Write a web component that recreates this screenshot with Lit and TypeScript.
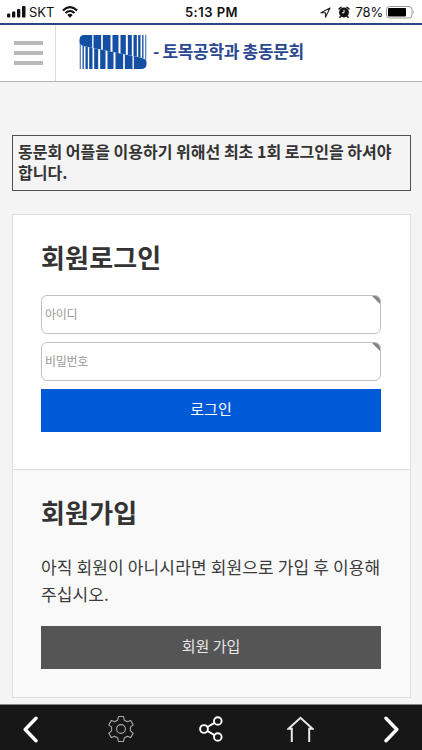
import { LitElement, html, svg, css } from "lit";
import { customElement } from "lit/decorators.js";

const LOGO_BARS = [
  [237, 39], [280, 23], [308, 23], [337, 18], [361, 16],
  [383, 12], [400, 10], [414, 7], [426, 4], [435.5, 3],
];

@customElement("app-root")
export class AppRoot extends LitElement {
  static styles = css`
    :host {
      display: flex;
      flex-direction: column;
      box-sizing: border-box;
      width: 422px;
      height: 750px;
      overflow: hidden;
      background: #f4f4f4;
      color: #333;
      font-family: "Noto Sans CJK KR", sans-serif;
    }
    * { box-sizing: border-box; }
    svg { display: block; flex: none; }
    h1, h2, p { margin: 0; }
    .status {
      display: grid;
      grid-template-columns: 1fr auto 1fr;
      align-items: center;
      height: 23px;
      flex: none;
      padding: 1px 7px 0 7px;
      background: #fff;
      color: #111;
      font: 13px/22px Inter, sans-serif;
    }
    .left, .right { display: flex; align-items: center; }
    .carrier { margin: 0 8px 0 3px; letter-spacing: -0.1px; }
    .time { font-weight: 600; letter-spacing: 0.5px; margin-left: 1px; }
    .right { justify-content: flex-end; }
    .alarm { margin: 0 6px 0 7px; }
    .percent { letter-spacing: -0.2px; margin-right: 3px; }
    .battery { margin-right: -1px; }
    .header {
      display: flex;
      height: 59px;
      flex: none;
      border-top: 2px solid #2b4686;
      border-bottom: 1px solid #b2b2b2;
      background: #fff;
    }
    .menu {
      width: 56px;
      flex: none;
      padding: 16px 0 0 14px;
      border-right: 1px solid #ddd;
    }
    .line { width: 29px; height: 4px; margin-bottom: 6px; background: #b9b9b9; }
    .brand { display: flex; align-items: flex-start; padding: 10px 0 0 23px; }
    .brand h1 {
      margin: 0 0 0 6px;
      color: #2b4791;
      font-size: 17px;
      line-height: 31px;
      font-weight: 700;
      letter-spacing: -0.33px;
      white-space: nowrap;
    }
    .content { flex: 1; min-height: 0; padding: 53px 11px 0 12px; }
    .notice {
      height: 56px;
      padding: 5px;
      border: 1px solid #505050;
      font-size: 16px;
      line-height: 21px;
      font-weight: 700;
      white-space: nowrap;
    }
    .panel {
      height: 484px;
      margin-top: 23px;
      border: 1px solid #dedede;
      background: #fff;
    }
    .login { height: 254px; padding: 22px 28px 0; }
    .join {
      height: 228px;
      padding: 22px 28px 0;
      border-top: 1px solid #dedede;
      background: #f9f9f9;
    }
    h2 { font-size: 26px; line-height: 40px; font-weight: 700; letter-spacing: 0.15px; }
    .field {
      position: relative;
      display: flex;
      align-items: center;
      width: 340px;
      height: 39px;
      margin-bottom: 8px;
      padding: 0 3px 2px;
      overflow: hidden;
      border: 1px solid #c2c2c6;
      border-radius: 6px;
      background: #fff;
      color: #999;
      font-size: 12px;
      letter-spacing: -0.3px;
    }
    .login h2 { margin-bottom: 18px; }
    .corner { position: absolute; top: 0; right: 0; }
    .button {
      display: flex;
      justify-content: center;
      width: 340px;
      height: 43px;
      font-size: 15px;
      line-height: 40px;
    }
    .primary { background: #005ad7; color: #fff; }
    .secondary { background: #555; color: #e8e8e8; }
    .join p {
      margin: 21px 0 19px;
      font-size: 17px;
      line-height: 27px;
      letter-spacing: 0.14px;
      white-space: nowrap;
      color: #3b3b3b;
    }
    .toolbar {
      display: flex;
      align-items: center;
      justify-content: space-between;
      height: 46px;
      flex: none;
      padding: 3px 22px 0;
      border-top: 1px solid #888;
      background: #171717;
    }
    .gear { margin-left: 4px; }
    .home { margin-right: 4px; }
  `;

  private bars() {
    return LOGO_BARS.map(([x, w]) => svg`<rect x=${x} y="105" width=${w} height="102" />`);
  }

  private logo() {
    return html`<svg width="68" height="34" viewBox="237 105 203 102" fill="#144fa4">
      <defs><clipPath id="half"><path d="M252 105H440V185C438 177 430 175 414 171L379 164L298 148L263 141C247 137 237 135 237 122Q238 105 252 105Z" /></clipPath></defs>
      <g clip-path="url(#half)">${this.bars()}</g>
      <g transform="rotate(180 338.5 156)"><g clip-path="url(#half)">${this.bars()}</g></g>
    </svg>`;
  }

  private field(label: string) {
    return html`<div class="field">${label}
      <svg class="corner" width="8" height="8" viewBox="0 0 8 8"><path d="M0 0H8V8Z" fill="#858580" /></svg>
    </div>`;
  }

  render() {
    return html`
      <div class="status">
        <div class="left">
          <svg width="19" height="12" viewBox="0 0 19 12" fill="#111"><rect y="7.5" width="3.3" height="4" rx="1"/><rect x="5" y="5.5" width="3.3" height="6" rx="1"/><rect x="10" y="3" width="3.3" height="8.5" rx="1"/><rect x="15" y="0" width="3.5" height="11.5" rx="1"/></svg>
          <span class="carrier">SKT</span>
          <svg width="16" height="12" viewBox="0 0 16 12" fill="none" stroke="#111" stroke-width="2.1"><path d="M.9 4.5Q8-2.3 15.1 4.5M3.5 7.1Q8 2.9 12.5 7.1"/><path d="M5.3 8.9Q8 6.5 10.7 8.9L8 11.7Z" fill="#111" stroke="none"/></svg>
        </div>
        <div class="time">5:13 PM</div>
        <div class="right">
          <svg width="11" height="11" viewBox="0 0 11 11"><path d="M.9 5.7 10 .9 5.5 10.2V5.7Z" fill="none" stroke="#222" stroke-width="1.1" stroke-linejoin="round"/></svg>
          <svg class="alarm" width="12" height="12" viewBox="0 0 12 12"><circle cx="6" cy="6.5" r="4.9" fill="#111"/><path d="M1 3 3 1.2M11 3 9 1.2M2.8 10.2 1.9 11.2M9.2 10.2l.9 1" stroke="#111" stroke-width="1.5" stroke-linecap="round"/><path d="M6 3.8V6.8H4" fill="none" stroke="#fff"/></svg>
          <span class="percent">78%</span>
          <svg class="battery" width="30" height="13" viewBox="0 0 30 13"><rect x=".5" y=".5" width="25.5" height="11.5" rx="3" fill="#fff" stroke="#999"/><rect x="2" y="2" width="18" height="8.5" rx="1" fill="#000"/><path d="M27.3 4.3q1.8 2 0 4Z" fill="#999"/></svg>
        </div>
      </div>
      <div class="header">
        <div class="menu"><div class="line"></div><div class="line"></div><div class="line"></div></div>
        <div class="brand">${this.logo()}<h1>- 토목공학과 총동문회</h1></div>
      </div>
      <div class="content">
        <div class="notice">동문회 어플을 이용하기 위해선 최초 1회 로그인을 하셔야<br />합니다.</div>
        <div class="panel">
          <div class="login">
            <h2>회원로그인</h2>
            ${this.field("아이디")}
            ${this.field("비밀번호")}
            <div class="button primary">로그인</div>
          </div>
          <div class="join">
            <h2>회원가입</h2>
            <p>아직 회원이 아니시라면 회원으로 가입 후 이용해<br />주십시오.</p>
            <div class="button secondary">회원 가입</div>
          </div>
        </div>
      </div>
      <div class="toolbar">
        <svg width="17" height="27" viewBox="0 0 17 27"><path d="M14 2.3 3.2 13.5 14 24.7" fill="none" stroke="#fff" stroke-width="3.4" stroke-linecap="round" stroke-linejoin="round"/></svg>
        <svg class="gear" width="26" height="28" viewBox="-13 -14 26 28" fill="none" stroke="#aaa" stroke-width="1.1" stroke-linejoin="round"><circle r="4.4"/><path d="M-2.6-12.5H2.6L3.2-9 6.3-7.2 9.6-8.6 12.2-4.2 9.4-1.9V1.9L12.2 4.2 9.6 8.6 6.3 7.2 3.2 9 2.6 12.5H-2.6L-3.2 9-6.3 7.2-9.6 8.6-12.2 4.2-9.4 1.9V-1.9L-12.2-4.2-9.6-8.6-6.3-7.2-3.2-9Z"/></svg>
        <svg width="24" height="26" viewBox="0 0 24 26" fill="none" stroke="#fff" stroke-width="1.9"><circle cx="5" cy="13" r="3.9"/><circle cx="18.8" cy="5" r="3.8"/><circle cx="18.8" cy="21" r="3.8"/><path d="M8.4 11 15.5 6.9M8.4 15 15.5 19.1"/></svg>
        <svg class="home" width="27" height="27" viewBox="0 0 27 27" fill="none" stroke="#e8e8e8" stroke-width="2"><path d="M4.8 26V12.8H1.5L13.5 1.8 25.5 12.8H22.2V26"/></svg>
        <svg width="17" height="27" viewBox="0 0 17 27"><path d="M3 2.3 13.8 13.5 3 24.7" fill="none" stroke="#fff" stroke-width="3.4" stroke-linecap="round" stroke-linejoin="round"/></svg>
      </div>
    `;
  }
}
